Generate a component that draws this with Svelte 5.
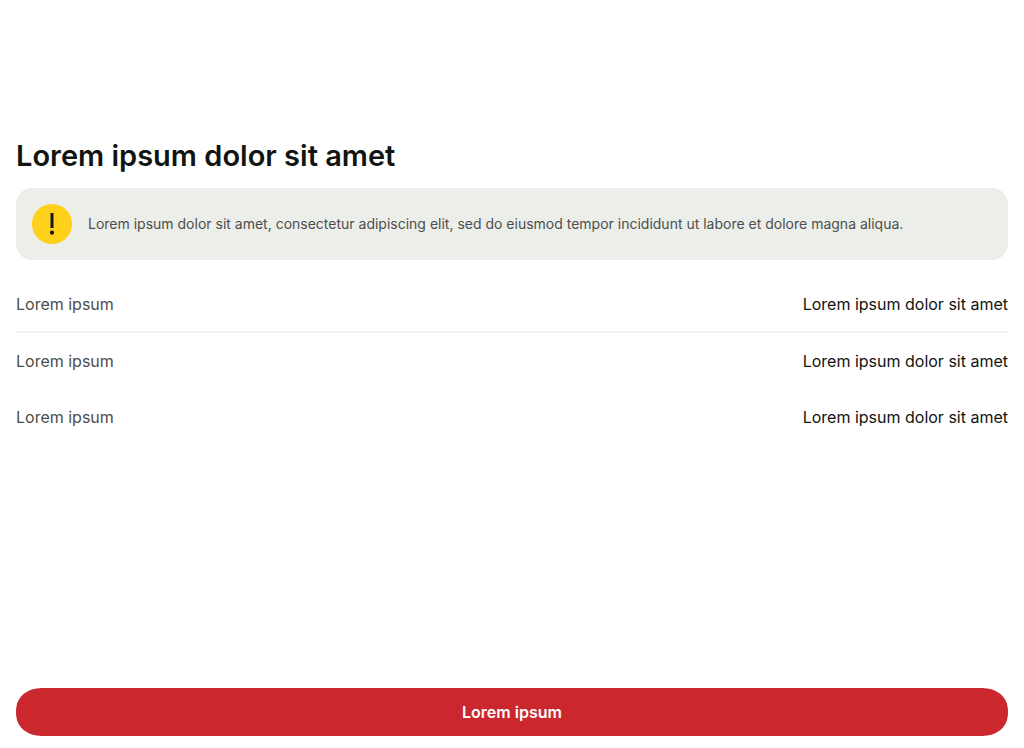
<script>
  const rows = [
    { label: 'Lorem ipsum', value: 'Lorem ipsum dolor sit amet' },
    { label: 'Lorem ipsum', value: 'Lorem ipsum dolor sit amet' },
    { label: 'Lorem ipsum', value: 'Lorem ipsum dolor sit amet' }
  ];
</script>

<div class="screen">
  <main>
    <h1>Lorem ipsum dolor sit amet</h1>
    <div class="notice" role="note">
      <svg width="40" height="40" viewBox="0 0 40 40" aria-hidden="true">
        <circle cx="20" cy="20" r="20" fill="#ffd01a" />
        <path d="M18.5 9h3v15h-3z" fill="#141712" />
        <circle cx="20" cy="28.7" r="2.1" fill="#141712" />
      </svg>
      <p>Lorem ipsum dolor sit amet, consectetur adipiscing elit, sed do eiusmod tempor incididunt ut labore et dolore magna aliqua.</p>
    </div>
    <dl>
      {#each rows as row}
        <div class="row">
          <dt>{row.label}</dt>
          <dd>{row.value}</dd>
        </div>
      {/each}
    </dl>
  </main>
  <footer>
    <button type="button">Lorem ipsum</button>
  </footer>
</div>

<style>
  :global(body) {
    background: #fff;
  }
  .screen {
    box-sizing: border-box;
    min-height: 100vh;
    display: flex;
    flex-direction: column;
    justify-content: space-between;
    gap: 24px;
    padding: 136px 16px 12px;
    font-family: Inter, 'Liberation Sans', sans-serif;
    color: #111411;
  }
  h1 {
    margin: 0 0 12px;
    font-size: 29px;
    line-height: 40px;
    font-weight: 600;
  }
  .notice {
    display: flex;
    align-items: center;
    gap: 16px;
    padding: 16px;
    border-radius: 16px;
    background: #eceeea;
  }
  .notice svg {
    flex: none;
  }
  .notice p {
    margin: 0;
    font-size: 14px;
    line-height: 20px;
    color: #4d4f4c;
  }
  dl {
    margin: 16px 0 0;
  }
  .row {
    display: flex;
    justify-content: space-between;
    gap: 16px;
    padding: 16px 0;
    font-size: 16px;
    line-height: 24px;
  }
  .row:first-child {
    padding-bottom: 15px;
    border-bottom: 2px solid #f0f0f0;
  }
  dt {
    color: #4d4d4d;
  }
  dd {
    margin: 0;
    text-align: right;
  }
  button {
    display: block;
    width: 100%;
    padding: 12px 24px;
    border: 0;
    border-radius: 28px / 24px;
    corner-shape: superellipse(1.2);
    background: #cb272f;
    color: #fff;
    font: inherit;
    font-size: 16px;
    line-height: 24px;
    font-weight: 600;
  }
</style>
